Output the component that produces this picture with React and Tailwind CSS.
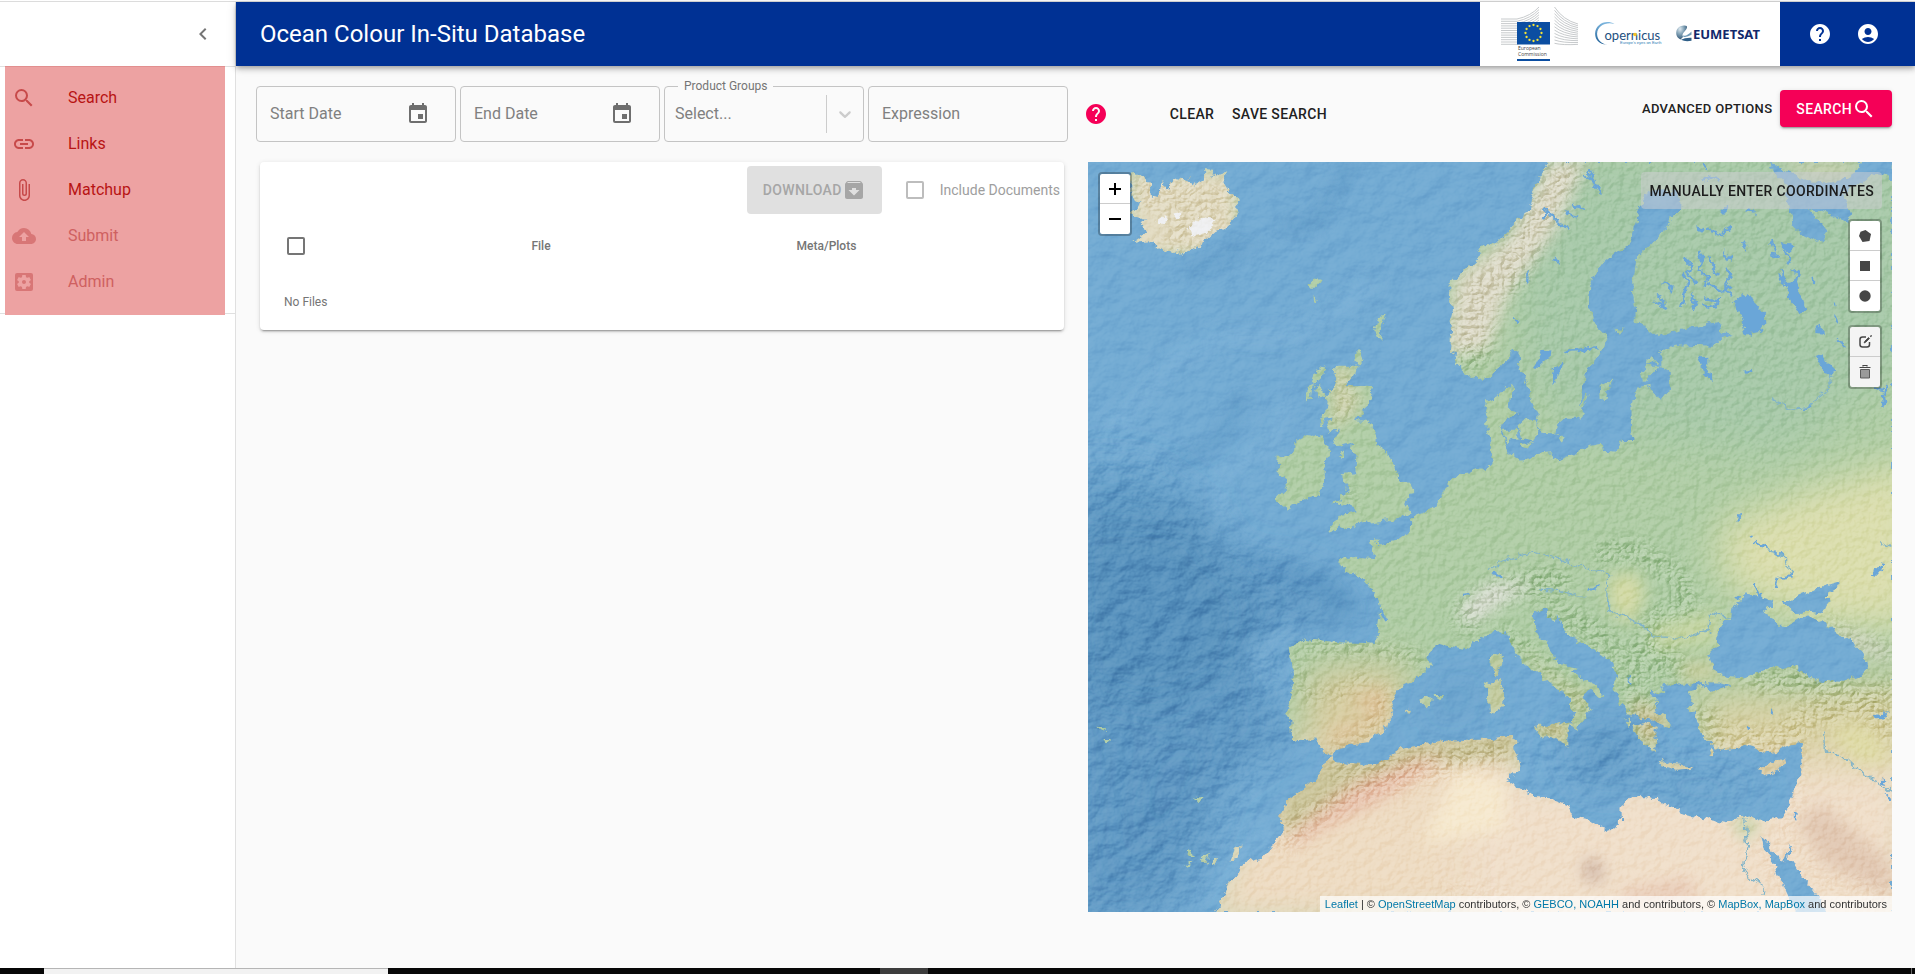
import React from "react";
import {
  MdSearch,
  MdLink,
  MdAttachFile,
  MdBackup,
  MdSettingsApplications,
  MdChevronLeft,
  MdHelp,
  MdAccountCircle,
  MdInsertInvitation,
  MdArchive,
} from "react-icons/md";

const navItems = [
  { label: "Search", Icon: MdSearch },
  { label: "Links", Icon: MdLink },
  { label: "Matchup", Icon: MdAttachFile },
  { label: "Submit", Icon: MdBackup, disabled: true },
  { label: "Admin", Icon: MdSettingsApplications, disabled: true },
];

/* ---------- map data: points are kept per sheet, each sheet has its own origin ---------- */

const SHEETS = { NW: [0, -36], NE: [1200, -36], SW: [0, 1104], SE: [1200, 1104] };

function shift(sheet, points) {
  const [dx, dy] = SHEETS[sheet];
  return points
    .trim()
    .split(/\s+/)
    .map((p) => {
      const [x, y] = p.split(",").map(Number);
      return `${x + dx},${y + dy}`;
    })
    .join("L");
}

const shape = (...parts) => "M" + parts.map(([s, p]) => shift(s, p)).join("L") + "Z";
const line = (s, p) => "M" + shift(s, p);

const mainland = shape(
  ["NE", "180,36 160,80 140,125 128,180 100,200 70,240 40,270 20,290 0,300"],
  ["NW", "1225,290 1190,310 1150,345 1120,375 1088,405 1085,440 1095,480 1085,520 1095,560 1092,605 1110,610 1105,640 1130,665 1160,685 1195,682 1225,655 1255,630"],
  ["NE", "75,590 95,615 98,660 120,700 130,745 155,790 150,820 165,848 200,850 205,818 230,800 268,800 278,745 288,690 292,655 325,625 345,590 360,560 335,535 310,515 300,450 305,400 320,370 345,335 380,305 425,275 438,230 450,200 440,180 460,160 456,135 490,120 560,122 580,140 580,180 545,215 520,260 480,300 445,325 438,380 442,440 450,480 445,520 475,530 510,558 560,540 620,528 690,512 700,540 745,555 700,570 675,590 620,588 560,590 520,608 520,650 548,665 548,720 525,752 500,735 485,708 455,715 440,750 433,770 435,830 440,878 400,880 385,908 345,905 340,885 300,892 260,915 205,938 185,910 150,915 105,935 90,930 60,905 48,870 40,845 30,820 60,805 82,795 60,770 62,745 75,712 55,712"],
  ["NW", "1235,738 1200,755 1193,790 1200,830 1212,860 1215,910 1220,940 1195,955 1190,965 1165,955 1150,970 1110,975 1085,1000 1060,1050 1035,1080 970,1105 968,1150 940,1165"],
  ["SW", "920,40 870,50 870,35 852,32 862,85 800,80 755,92 770,120 820,135 845,165 875,210 880,240 872,300 865,345 830,342 760,340 700,335 650,330 605,352 612,400 618,460 610,510 595,550 610,570 612,625 650,628 685,622 700,655 725,670 750,650 790,642 840,638 855,615 888,605 895,575 918,552 905,515 920,490 945,460 990,440 1025,410 1015,380 1025,355 1050,337 1090,348 1125,356 1160,335 1195,312 1222,297 1255,310"],
  ["SE", "75,350 100,390 150,430 195,465 235,495 250,525 265,550 250,585 262,592 280,570 298,545 298,520 280,505 290,480 310,478 332,500 345,495 335,475 300,460 265,440 240,425 265,415 215,405 195,385 180,345 155,325 135,290 135,250 160,235 185,232 180,260 200,275 210,250 240,310 280,335 330,360 375,395 385,430 380,480 400,520 430,555 500,568 530,590 540,585 530,565 495,550 505,530 488,500 490,475 530,485 515,470 555,458 600,462 650,455 670,448 650,470 610,480 605,510 625,540 635,580 645,615 670,640 715,660 750,655 765,640 800,650 830,668 870,662 910,640 945,635 940,680 940,735 920,780 905,830 880,868 820,875 790,862 750,865 715,883 650,870 580,855 570,840 500,815 480,805 440,805 400,835 402,875 370,905 340,895 300,870 250,860 235,825 180,805 130,800 90,775 58,755 70,735 95,710 85,680 75,650 90,632 60,618 0,632"],
  ["SW", "1200,632 1130,632 1080,635 1000,648 940,660 900,685 850,712 790,705 745,700 725,680 710,700 690,750 640,785 600,815 580,860 585,905 555,950 520,990 470,1000 455,1030 420,1060 405,1110 385,1146"],
  ["SE", "1212,1146"],
  ["NE", "1212,36"]
);

const innerSeas = [
  shape(["SE", "770,190 800,195 860,212 850,230 828,245 860,265 862,290 890,290 930,265 980,262 1030,295 1080,330 1130,370 1140,415 1115,440 1060,455 1000,452 950,435 915,408 850,412 800,432 770,445 710,440 675,420 668,385 660,375 690,345 692,300 700,270 725,270 730,235 755,215"]),
  shape(["SE", "905,210 935,195 975,180 1055,157 1045,175 1005,200 1030,212 1000,230 1005,250 960,245 915,250 905,235 880,210"]),
  shape(["SE", "645,472 665,457 700,458 735,466 700,475 670,482"]),
  shape(["SE", "820,918 850,955 885,995 896,970 908,935 900,988 920,1000 950,1050 990,1100 1015,1150 925,1150 895,1085 870,1025 845,985 825,945"]),
  shape(["NE", "840,30 870,50 915,72 960,94 1010,100 1060,94 1100,70 1125,30 1215,30 1212,90 1190,72 1150,62 1130,100 1080,110 1070,140 1090,190 1080,218 1045,205 1010,185 975,175 960,185 1000,215 1015,240 1010,270 990,278 950,260 910,225 905,175 890,140 900,110 860,70"]),
].join("");

const islands = [
  shape(["NW", "745,650 808,650 790,680 765,710 800,712 852,710 845,745 820,790 785,812 835,815 860,850 872,895 905,920 915,950 930,995 965,998 973,1025 945,1060 962,1085 930,1105 860,1112 800,1120 790,1140 755,1125 722,1150 760,1095 815,1085 800,1070 740,1055 775,1035 780,1005 760,975 805,970 808,920 795,895 800,875 745,885 740,865 765,825 725,850 718,830 735,795 715,800 700,830 700,815 725,770 715,745 740,700"]),
  shape(["NW", "625,875 660,855 700,862 728,905 705,935 708,980 695,1030 640,1055 595,1075 562,1050 600,1010 595,985 572,965 575,920 610,918 625,890"]),
  shape(["NW", "672,700 678,675 704,658 692,690 680,705"]),
  shape(["NW", "660,750 662,715 670,712 665,745"]),
  shape(["NW", "685,720 695,710 710,735 698,742"]),
  shape(["NW", "755,920 765,908 762,925"]),
  shape(["NW", "130,70 150,68 185,105 190,150 215,130 220,95 235,120 265,88 300,92 315,115 350,95 352,60 372,62 370,85 412,72 400,95 415,120 445,145 450,180 420,225 385,240 350,270 300,300 275,308 225,295 195,270 140,275 175,250 165,225 180,205 130,190 170,160 130,140"]),
  shape(["NW", "665,402 680,388 696,392 685,410 672,410"]),
  shape(["NW", "680,445 688,456 680,450"]),
  shape(["NW", "862,540 872,510 888,500 878,530 872,560"]),
  shape(["NW", "800,625 810,605 820,630 805,638"]),
  shape(["NW", "1170,300 1200,285 1218,290 1190,312"]),
  shape(["SE", "12,385 35,370 37,400 25,432 10,410"]),
  shape(["SE", "-5,465 35,448 45,480 42,530 20,545 5,540 3,490"]),
  shape(["SE", "142,590 200,590 245,578 235,615 235,642 200,625 145,605"]),
  shape(["SE", "520,697 560,705 610,710 570,716 525,706"]),
  shape(["SE", "818,715 850,702 892,688 870,720 830,731"]),
  shape(["SE", "662,672 672,655 678,660 668,678"]),
  shape(["SE", "440,590 470,578 500,590 495,615 502,640 498,660 485,640 470,645 455,625"]),
  shape(["SE", "505,555 530,560 548,590 535,582"]),
  shape(["SE", "600,532 615,530 620,542 605,542"]),
  shape(["SE", "500,478 512,482 508,488"]),
  shape(["SE", "412,575 425,570 420,590"]),
  shape(["SW", "1000,515 1020,505 1030,515 1015,528"]),
  shape(["SW", "1046,498 1060,498 1056,504"]),
  shape(["SW", "958,546 968,541 966,548"]),
  shape(["SW", "300,965 306,963 310,975 304,975"]),
  shape(["SW", "340,985 358,975 350,995"]),
  shape(["SW", "376,990 386,990 386,1004 378,1002"]),
  shape(["SW", "430,990 440,965 455,952 444,985"]),
  shape(["SW", "294,1005 304,1000 300,1010"]),
  shape(["SW", "324,803 342,806 330,810"]),
  shape(["SW", "34,594 56,596 40,599"]),
  shape(["SW", "52,630 62,630 58,634"]),
  shape(["NE", "335,710 370,692 350,745 338,750"]),
  shape(["NE", "270,798 296,732 286,765 278,800"]),
  shape(["NE", "465,668 480,650 508,650 490,672 470,690"]),
  shape(["NE", "474,625 488,618 500,632 480,640"]),
  shape(["NE", "95,830 115,812 140,812 148,845 130,868 100,860"]),
  shape(["NE", "50,842 82,842 82,865 60,870"]),
  shape(["NE", "90,882 128,880 118,892"]),
  shape(["NE", "215,860 232,862 225,874"]),
  shape(["NE", "385,540 405,542 398,550"]),
].join("");

const lakes = [
  shape(["NE", "765,432 800,455 830,490 832,520 820,540 790,545 785,558 775,550 760,500 735,460"]),
  shape(["NE", "905,350 935,370 930,400 945,450 955,480 935,490 915,460 895,430 900,410 870,385 868,365 895,400 920,395 925,375"]),
  shape(["NE", "635,622 658,620 658,650 672,690 655,682 640,650"]),
  shape(["NE", "140,650 165,600 190,598 188,625 165,635 150,650"]),
  shape(["NE", "193,700 198,655 222,635 208,680"]),
  shape(["NE", "982,625 1010,612 1018,640 1042,665 1025,678 1000,650"]),
  shape(["NE", "985,538 990,530 1008,538 1006,548 985,546"]),
  shape(["NE", "882,275 900,280 920,295 905,308 885,295"]),
  shape(["NE", "848,308 870,312 868,322 852,320"]),
  shape(["NE", "628,225 645,235 650,248 630,242"]),
  shape(["NE", "705,300 718,315 735,322 735,335 712,322"]),
  shape(["NE", "768,665 785,660 792,668 775,674"]),
  shape(["NE", "968,380 976,378 975,398 969,396"]),
  shape(["SE", "1160,555 1180,552 1200,543 1190,565 1170,568"]),
  shape(["SE", "845,548 852,536 860,555 850,562"]),
  shape(["SE", "780,582 792,598 782,596"]),
  shape(["SE", "1183,738 1198,762 1186,760"]),
  shape(["SE", "1194,790 1210,808 1198,812"]),
  shape(["SE", "800,34 835,48 846,62 815,50"]),
  shape(["SE", "870,140 905,135 915,142 880,146"]),
  shape(["SE", "1150,132 1172,115 1185,95 1188,110 1165,138"]),
  shape(["SE", "920,846 926,846 925,872 921,870"]),
].join("");

const streams = [
  line("NE", "300,60 315,95 340,128"),
  line("NE", "290,80 320,95"),
  line("NE", "165,205 175,180 210,215 240,235"),
  line("NE", "200,320 212,335 208,350"),
  line("NE", "230,190 270,200"),
  line("NE", "255,160 290,180"),
  line("NE", "118,360 118,400"),
  line("NE", "80,500 92,515"),
  line("NE", "232,603 270,600 320,592 325,605"),
  line("NE", "590,325 610,345 600,370 625,400"),
  line("NE", "632,300 645,330 635,360 660,380 650,410"),
  line("NE", "665,320 670,350 690,375"),
  line("NE", "585,370 600,395 590,430 580,470"),
  line("NE", "610,430 625,460 615,480"),
  line("NE", "650,445 690,450 680,475 640,465"),
  line("NE", "715,350 725,385 710,415 735,435"),
  line("NE", "660,400 700,420 730,410"),
  line("NE", "520,400 550,405 545,430"),
  line("NE", "515,430 530,470 500,455"),
  line("NE", "660,240 700,252 735,230"),
  line("NE", "700,190 712,168"),
  line("NE", "770,180 800,185"),
  line("NE", "650,40 660,60"),
  line("NE", "690,90 670,80 640,90"),
  line("NE", "765,275 778,300"),
  line("NE", "880,360 890,390"),
  line("NE", "890,300 905,340"),
  line("NE", "1035,455 1036,470"),
  line("NE", "1042,500 1048,520"),
  line("NE", "1048,565 1068,588"),
  line("NE", "945,778 975,764"),
  line("NE", "1200,705 1185,735 1190,770"),
  line("NE", "1160,715 1185,720"),
  line("NE", "752,1090 752,1115"),
  line("NE", "785,1155 790,1165"),
  line("NE", "800,1175 840,1198"),
  line("NE", "850,275 860,310"),
  line("SE", "860,60 892,90"),
  line("SE", "912,128 910,142"),
  line("SE", "870,145 860,175"),
  line("SE", "18,130 42,140"),
  line("SE", "305,182 330,168"),
  line("SE", "742,198 750,210"),
  line("SE", "800,160 808,195 820,195"),
  line("SE", "420,445 430,460"),
  line("SW", "1125,195 1145,192"),
  line("SW", "1225,130 1240,140"),
  line("SW", "876,235 895,270"),
].join("");

const rivers = [
  line("SE", "0,120 60,85 130,65 200,85 270,110 330,125 362,128 358,240 390,255 450,275 500,320 590,325 660,300 668,250 725,262"),
  line("SE", "835,60 860,66 890,90 912,130"),
  line("SE", "1010,600 1012,660 1080,690 1130,735 1180,760 1212,790"),
  line("SE", "770,865 780,960 765,1000 780,1040 830,1070 825,1095"),
  line("SE", "150,180 220,185 290,205"),
  line("NE", "850,745 900,775 960,770 1020,720 1028,680"),
  line("SE", "1180,40 1210,50"),
].join("");

function TerrainMap() {
  return (
    <svg
      viewBox="0 0 2412 2250"
      preserveAspectRatio="xMidYMid slice"
      className="absolute inset-0 h-full w-full"
      role="img"
      aria-label="Relief map of Europe"
    >
      <defs>
        <filter id="coast" x="0" y="0" width="2412" height="2250" filterUnits="userSpaceOnUse">
          <feTurbulence type="fractalNoise" baseFrequency="0.04" numOctaves="4" seed="4" />
          <feDisplacementMap in="SourceGraphic" scale="28" xChannelSelector="R" yChannelSelector="G" />
        </filter>
        <filter id="blurL" x="-50%" y="-50%" width="200%" height="200%">
          <feGaussianBlur stdDeviation="60" />
        </filter>
        <filter id="blurM" x="-50%" y="-50%" width="200%" height="200%">
          <feGaussianBlur stdDeviation="24" />
        </filter>
        <filter id="relief" x="0" y="0" width="2412" height="2250" filterUnits="userSpaceOnUse" colorInterpolationFilters="sRGB">
          <feTurbulence type="fractalNoise" baseFrequency="0.045" numOctaves="4" seed="11" result="n" />
          <feColorMatrix in="n" type="matrix" values="0 0 0 0 0  0 0 0 0 0  0 0 0 0 0  1 0 0 0 0" />
          <feDiffuseLighting surfaceScale="14" diffuseConstant="0.75" lightingColor="#ffffff">
            <feDistantLight azimuth="225" elevation="45" />
          </feDiffuseLighting>
        </filter>
        <filter id="ridges" x="0" y="0" width="2412" height="2250" filterUnits="userSpaceOnUse" colorInterpolationFilters="sRGB">
          <feTurbulence type="turbulence" baseFrequency="0.032 0.04" numOctaves="4" seed="23" result="n" />
          <feColorMatrix in="n" type="matrix" values="0 0 0 0 0  0 0 0 0 0  0 0 0 0 0  1 0 0 0 0" />
          <feDiffuseLighting surfaceScale="18" diffuseConstant="0.8" lightingColor="#ffffff">
            <feDistantLight azimuth="225" elevation="48" />
          </feDiffuseLighting>
        </filter>
        <filter id="seabed" x="0" y="0" width="2412" height="2250" filterUnits="userSpaceOnUse" colorInterpolationFilters="sRGB">
          <feTurbulence type="fractalNoise" baseFrequency="0.014 0.018" numOctaves="5" seed="7" result="n" />
          <feColorMatrix in="n" type="matrix" values="0 0 0 0 0  0 0 0 0 0  0 0 0 0 0  1 0 0 0 0" />
          <feDiffuseLighting surfaceScale="16" diffuseConstant="0.72" lightingColor="#ffffff">
            <feDistantLight azimuth="225" elevation="45" />
          </feDiffuseLighting>
        </filter>
        <mask id="deep" maskUnits="userSpaceOnUse" x="0" y="0" width="2412" height="2250">
          <rect width="2412" height="2250" fill="#777" />
          <g filter="url(#blurL)" fill="#fff">
            <path d={shape(["NW", "-80,850 200,850 400,1150 700,1300 600,1800 300,2300 -80,2300"])} />
            <path d={shape(["SE", "-100,640 250,600 500,600 900,720 700,840 300,800"])} />
          </g>
        </mask>
        <mask id="land" maskUnits="userSpaceOnUse" x="0" y="0" width="2412" height="2250">
          <g filter="url(#coast)">
            <rect width="2412" height="2250" fill="#000" />
            <path d={mainland} fill="#fff" stroke="#fff" strokeWidth="6" />
            <path d={islands} fill="#fff" stroke="#fff" strokeWidth="6" />
            <path d={innerSeas} fill="#000" />
          </g>
        </mask>
        <mask id="ranges" maskUnits="userSpaceOnUse" x="0" y="0" width="2412" height="2250">
          <g filter="url(#blurM)" stroke="#fff" fill="none" strokeLinecap="round" strokeLinejoin="round">
            <path d={line("NW", "1150,600 1170,430 1260,370")} strokeWidth="120" />
            <path d={line("NE", "0,420 90,320 170,170 230,50")} strokeWidth="110" />
            <path d={line("NW", "180,120 400,160 280,260")} strokeWidth="120" opacity="0.8" />
            <path d={line("NW", "745,800 790,760 760,690")} strokeWidth="50" opacity="0.8" />
            <path d={line("NW", "780,1010 790,1050")} strokeWidth="40" opacity="0.7" />
            <path d={line("SW", "1140,290 1130,240 1200,190")} strokeWidth="70" />
            <path d={line("SE", "0,190 90,170 210,150")} strokeWidth="80" />
            <path d={line("SE", "40,300 130,370 220,450 290,540")} strokeWidth="45" />
            <path d={line("SE", "200,250 320,310 420,400 450,500 480,620")} strokeWidth="90" opacity="0.8" />
            <path d={line("SE", "340,70 450,60 560,130 610,230 500,260 470,350 560,380")} strokeWidth="60" />
            <path d={line("SE", "480,300 500,420 580,430")} strokeWidth="60" opacity="0.7" />
            <path d={line("SW", "650,350 850,355 1000,385")} strokeWidth="40" />
            <path d={line("SW", "630,400 650,500 780,480 830,440")} strokeWidth="40" opacity="0.8" />
            <path d={line("SW", "740,650 850,610 900,480")} strokeWidth="45" opacity="0.8" />
            <path d={line("SW", "590,930 650,870 780,790 1000,720 1230,670")} strokeWidth="80" opacity="0.8" />
            <path d={line("SW", "740,710 900,700 1240,650")} strokeWidth="50" opacity="0.8" />
            <path d={line("SE", "650,560 680,620 860,640 960,560 1200,480")} strokeWidth="75" />
            <path d={line("SE", "800,450 940,450 1100,490 1212,600")} strokeWidth="75" />
            <path d={line("SE", "1010,280 1120,330 1212,370")} strokeWidth="40" />
            <path d={line("SE", "945,650 920,800 880,940")} strokeWidth="35" opacity="0.7" />
            <path d={line("SE", "830,960 900,1100")} strokeWidth="40" opacity="0.7" />
            <path d={line("SE", "920,950 1000,1060 1200,1080")} strokeWidth="40" opacity="0.6" />
            <path d={line("SW", "1060,1080 1240,1090")} strokeWidth="60" opacity="0.4" />
            <path d={line("SE", "140,600 240,600")} strokeWidth="40" />
          </g>
        </mask>
      </defs>

      <rect width="2412" height="2250" fill="#73abd3" />
      <g filter="url(#blurL)" fill="#4c86b4">
        <path d={shape(["NW", "-80,950 180,950 260,1010 400,1180 500,1300 480,1560 200,1700 -80,1600"])} opacity="0.4" />
        <path d={shape(["SW", "430,100 640,110 800,220 780,290 590,290 500,400 560,520 620,620 400,760 330,1000 250,1150 -80,1200 -80,-60 350,-60"])} opacity="0.5" />
        <path d={shape(["SW", "180,650 420,640 400,760 250,900 120,1000"])} opacity="0.2" />
        <path d={shape(["SE", "230,620 420,560 470,700 360,780 260,740"])} opacity="0.45" />
        <path d={shape(["SE", "400,740 640,720 860,760 700,830 500,800"])} opacity="0.25" />
        <path d={shape(["SW", "1040,470 1180,400 1180,560 1000,600"])} opacity="0.2" />
      </g>
      <g filter="url(#blurM)" fill="none" stroke="#8cbde0" strokeWidth="30" strokeLinecap="round" opacity="0.5">
        <path d={line("NW", "80,830 240,640 400,560 620,560 850,400")} />
        <path d={line("NW", "400,1100 400,960 540,890 600,760")} />
        <path d={line("SW", "600,300 500,370 540,450")} />
        <path d={line("SW", "560,900 460,980 380,1100")} />
      </g>
      <g filter="url(#blurM)" fill="none" stroke="#4a86b8" strokeWidth="16" strokeLinecap="round" opacity="0.7">
        <path d={line("NW", "590,230 680,220 740,120 790,40")} />
        <path d={line("NW", "300,360 400,330 480,280")} />
        <path d={line("NW", "250,950 380,880 470,740")} />
        <path d={line("SW", "470,90 600,130 720,170 790,240")} strokeWidth="26" />
      </g>
      <rect width="2412" height="2250" filter="url(#seabed)" mask="url(#deep)" opacity="0.5" className="mix-blend-soft-light" />

      <g mask="url(#land)">
        <rect width="2412" height="2250" fill="#b0cda6" />
        <g filter="url(#blurL)">
          <path d={shape(["NE", "60,0 1300,0 1300,620 900,900 300,860 100,700"])} fill="#a7c9a9" />
          <path d={shape(["SE", "700,-20 950,-120 1300,-220 1300,300 1000,280 740,190 690,80"])} fill="#dbdeae" />
          <path d={shape(["SW", "560,660 1300,560 1300,1200 300,1200"])} fill="#eedcc3" />
          <path d={shape(["SE", "-60,720 1300,690 1300,1300 -60,1300"])} fill="#f0dfca" />
          <path d={shape(["SE", "620,500 1000,480 1300,450 1300,700 640,700"])} fill="#d9d2a6" />
          <path d={shape(["SW", "660,420 960,400 960,640 640,700"])} fill="#d8cda2" />
        </g>
        <g filter="url(#blurM)">
          <path d={shape(["SW", "580,690 740,660 1300,590 1300,680 1080,700 800,760 620,900 560,900"])} fill="#cdc79e" />
          <path d={shape(["SW", "780,500 900,470 900,560 740,650 720,600 850,560"])} fill="#dfc79f" />
          <path d={shape(["SW", "800,760 980,690 1080,680 900,800 700,900 600,960 620,900"])} fill="#e8c3ad" />
          <path d={shape(["SW", "1110,720 1250,750 1250,900 1000,940"])} fill="#f6e9cf" />
          <path d={shape(["NE", "-130,620 -100,380 60,260 180,30 300,30 200,250 60,440 0,600"])} fill="#dcd9c6" />
          <path d={shape(["NW", "120,60 450,60 460,320 130,320"])} fill="#e2dbc2" />
          <path d={shape(["NW", "730,650 810,650 780,720 830,730 800,790 730,850"])} fill="#cfd2ad" />
          <path d={shape(["SE", "360,140 450,130 470,200 430,280 370,240"])} fill="#d4daa6" />
          <path d={shape(["SE", "490,290 690,240 700,340 500,360"])} fill="#c6d6a4" />
          <path d={shape(["SE", "560,400 680,390 700,440 600,460"])} fill="#c9cfa0" />
          <path d={shape(["SE", "800,430 940,410 1140,430 1212,400 1212,440 900,470"])} fill="#b5cba1" />
          <path d={shape(["SE", "60,330 100,360 250,470 330,490 280,580 240,520"])} fill="#bfcb9f" />
          <path d={shape(["SE", "430,500 560,560 500,660 440,620"])} fill="#cbc69c" />
          <path d={shape(["SE", "10,370 40,370 50,545 0,545"])} fill="#cdca9c" />
          <path d={shape(["SE", "140,570 250,570 240,650 140,610"])} fill="#cdc79c" />
          <path d={shape(["SE", "510,690 900,680 880,735 510,720"])} fill="#d6c89e" />
          <path d={shape(["SE", "1020,590 1150,590 1212,700 1100,700"])} fill="#dfdba8" />
          <path d={shape(["SE", "930,870 1000,1000 1212,1100 1212,1000 1000,820"])} fill="#e2c9b4" />
          <path d={shape(["SE", "730,866 820,870 775,930"])} fill="#b8cf9f" />
          <path d={shape(["SE", "280,1000 330,980 350,1050 300,1060"])} fill="#cfb5a4" />
          <path d={shape(["SE", "400,1080 600,1040 640,1110 400,1140"])} fill="#e9cdb9" />
          <path d={shape(["SE", "1010,280 1120,320 1212,360 1212,390 1080,350"])} fill="#d0d3c0" />
          <path d={shape(["SE", "-90,240 0,160 150,160 60,210 -60,290"])} fill="#d9ddd2" />
          <path d={shape(["NE", "860,30 1120,30 1080,90 960,90"])} fill="#c5cfae" />
        </g>
        <rect width="2412" height="2250" filter="url(#relief)" opacity="0.28" className="mix-blend-soft-light" />
        <rect width="2412" height="2250" filter="url(#ridges)" mask="url(#ranges)" opacity="0.8" className="mix-blend-soft-light" />
        <g fill="#f2f4fa" filter="url(#coast)" opacity="0.85">
          <path d={shape(["NW", "300,235 340,200 385,208 360,245 310,258"])} />
          <path d={shape(["NW", "205,215 235,192 240,205 215,222"])} />
          <path d={shape(["NW", "255,195 280,186 280,205 262,208"])} />
        </g>
        <path d={lakes} fill="#6ba6d8" filter="url(#coast)" />
        <path d={streams} fill="none" stroke="#6ba6d8" strokeWidth="7" filter="url(#coast)" />
        <path d={rivers} fill="none" stroke="#82b4c8" strokeWidth="4" filter="url(#coast)" />
      </g>
    </svg>
  );
}

/* ---------- logos ---------- */

const stars = Array.from({ length: 12 }, (_, i) => {
  const a = (i * Math.PI) / 6;
  return [32.5 + 8 * Math.sin(a), 27 - 8 * Math.cos(a)];
});

function CommissionLogo() {
  return (
    <svg viewBox="0 0 79 56" className="h-14 w-[79px] shrink-0" role="img" aria-label="European Commission">
      <g stroke="#b9bcbf" strokeWidth="0.8" fill="none">
        {Array.from({ length: 12 }, (_, i) => (
          <path key={i} d={`M0 ${13 + i * 2.3}H16Q30 ${10 + i * 2.2} 38 ${1 + i * 2.6}`} />
        ))}
        {Array.from({ length: 12 }, (_, i) => (
          <path key={"r" + i} d={`M53.500 ${1 + i * 3.3}Q62 ${14 + i * 2.3} 77 ${18 + i * 1.85}`} />
        ))}
      </g>
      <path d="M38 0H53V40H38Z" fill="#fff" />
      <rect x="16" y="16" width="33" height="22.500" fill="#0b4ea2" />
      {stars.map(([x, y], i) => (
        <circle key={i} cx={x} cy={y} r="1.15" fill="#f5e335" />
      ))}
      <text x="17" y="44" fontSize="5" fontFamily="'Open Sans', sans-serif" fill="#404040">European</text>
      <text x="17" y="50" fontSize="5" fontFamily="'Open Sans', sans-serif" fill="#404040">Commission</text>
      <rect x="16" y="53" width="33" height="2" fill="#0b4ea2" />
    </svg>
  );
}

function CopernicusLogo() {
  return (
    <svg viewBox="0 0 68 28" className="h-7 w-[68px] shrink-0" role="img" aria-label="Copernicus">
      <defs>
        <linearGradient id="arc" x1="0" y1="0" x2="0" y2="1">
          <stop offset="0" stopColor="#7fb8e0" />
          <stop offset="1" stopColor="#175a93" />
        </linearGradient>
      </defs>
      <path d="M20.500 4C12-1 1.500 4 1.100 13.500C.9 20.500 6.500 25 13 24.600C7.500 23.600 2.900 19.500 3.100 13.500C3.500 6 12 1.500 20.500 4Z" fill="url(#arc)" />
      <text x="10.500" y="20" fontSize="13" fontFamily="Lato, sans-serif" fill="#1d4f80">opernicus</text>
      <circle cx="41" cy="14.500" r="1.800" fill="#f7c325" />
      <text x="26" y="24" fontSize="4" fontFamily="'Liberation Sans', sans-serif" fill="#2b7ab5">Europe’s eyes on Earth</text>
    </svg>
  );
}

function EumetsatLogo() {
  return (
    <svg viewBox="0 0 88 18" className="h-[18px] w-[88px] shrink-0" role="img" aria-label="EUMETSAT">
      <defs>
        <radialGradient id="globe" cx="0.35" cy="0.25" r="0.8">
          <stop offset="0" stopColor="#dde8ef" />
          <stop offset="0.5" stopColor="#7c9db2" />
          <stop offset="1" stopColor="#2c4f70" />
        </radialGradient>
      </defs>
      <path d="M8 .5C13 .3 11 4 8.500 6.500C6.500 8.500 6 10 7 12L4.500 14.500C1 13 0 10 .3 7C.8 3 4 .7 8 .5Z" fill="url(#globe)" />
      <path d="M7 10.500Q11 11.500 15.500 6.500V9.800Q11 12.500 7.300 11.700Z" fill="#6f99b6" />
      <path d="M5 14.800Q9 12.500 15.500 12.800V15.800Q9 17 5 14.800Z" fill="#2f5f88" />
      <text x="17" y="14" fontSize="13" fontWeight="700" fontFamily="'Noto Sans', sans-serif" fill="#12286b">EUMETSAT</text>
    </svg>
  );
}

/* ---------- page parts ---------- */

function Sidebar() {
  return (
    <aside className="flex w-59 shrink-0 flex-col border-r border-[#e0e0e0] bg-white">
      <div className="flex h-16 items-center justify-end pr-5">
        <button type="button" aria-label="Collapse menu" className="text-[#757575]">
          <MdChevronLeft size={24} />
        </button>
      </div>
      <nav className="relative border-y border-[#e0e0e0] py-2">
        <div className="absolute -top-px right-2.5 -bottom-0.5 left-[5px] border-t border-[#e28f8f] bg-[#eda2a2]" />
        <ul className="relative">
          {navItems.map(({ label, Icon, disabled }) => (
            <li key={label}>
              <a
                href={"#" + label.toLowerCase()}
                aria-disabled={disabled}
                className={
                  disabled
                    ? "flex h-[46px] items-center gap-8 pl-3 text-base text-[#cf6060]"
                    : "flex h-[46px] items-center gap-8 pl-3 text-base text-[#b81414]"
                }
              >
                <Icon size={24} className={disabled ? "text-[#d87676]" : "text-[#c74a4a]"} />
                {label}
              </a>
            </li>
          ))}
        </ul>
      </nav>
    </aside>
  );
}

function Header() {
  return (
    <header className="relative z-10 flex h-16 items-center bg-[#003194] pl-6 text-white shadow-[0_2px_4px_-1px_rgba(0,0,0,0.2),0_4px_5px_rgba(0,0,0,0.14),0_1px_10px_rgba(0,0,0,0.12)]">
      <h1 className="flex-1 text-2xl">Ocean Colour In-Situ Database</h1>
      <div className="flex h-16 w-[300px] items-center gap-3.5 bg-white pl-[21px]">
        <CommissionLogo />
        <CopernicusLogo />
        <EumetsatLogo />
      </div>
      <div className="flex gap-6 pr-[35px] pl-7">
        <button type="button" aria-label="Help"><MdHelp size={24} /></button>
        <button type="button" aria-label="Account"><MdAccountCircle size={24} /></button>
      </div>
    </header>
  );
}

const field = "flex h-14 w-50 items-center rounded border border-[#c4c4c4]";
const input = "w-full min-w-0 bg-transparent pl-[13px] text-base outline-none placeholder:text-[#808080]";
const textButton = "px-2 text-sm font-medium tracking-wide text-[#212121]";

function DateField({ label }) {
  return (
    <div className={field}>
      <input type="text" aria-label={label} placeholder={label} className={input} />
      <button type="button" aria-label={"Pick " + label} className="mr-[25px] ml-6 text-[#6e6e6e]">
        <MdInsertInvitation size={24} />
      </button>
    </div>
  );
}

function SearchForm() {
  return (
    <form className="flex items-start justify-between py-5 pr-[23px] pl-5" onSubmit={(e) => e.preventDefault()}>
      <div className="flex items-center gap-1">
        <DateField label="Start Date" />
        <DateField label="End Date" />
        <div className={field + " relative"}>
          <label htmlFor="groups" className="absolute -top-[9px] left-[13px] bg-[#fafafa] px-1.5 text-xs leading-4 text-[#757575]">
            Product Groups
          </label>
          <select id="groups" className="h-full w-full appearance-none bg-transparent pl-2.5 text-base text-[#808080] outline-none">
            <option>Select...</option>
          </select>
          <div className="pointer-events-none absolute top-2 right-0 bottom-2 flex w-[37px] items-center justify-center border-l border-[#ccc]">
            <svg viewBox="0 0 20 20" className="size-5 fill-[#ccc]" aria-hidden="true">
              <path d="M4.516 7.548c0.436-0.446 1.043-0.481 1.576 0l3.908 3.747 3.908-3.747c0.533-0.481 1.141-0.446 1.574 0 0.436 0.445 0.408 1.197 0 1.615-0.406 0.418-4.695 4.502-4.695 4.502-0.217 0.223-0.502 0.335-0.787 0.335s-0.570-0.112-0.789-0.335c0 0-4.287-4.084-4.695-4.502s-0.436-1.170 0-1.615z" />
            </svg>
          </div>
        </div>
        <div className={field}>
          <input type="text" aria-label="Expression" placeholder="Expression" className={input} />
        </div>
        <button type="button" aria-label="Expression help" className="ml-3 text-[#f50057]">
          <MdHelp size={24} />
        </button>
        <div className="ml-12 flex">
          <button type="button" className={textButton + " w-16"}>CLEAR</button>
          <button type="button" className={textButton}>SAVE SEARCH</button>
        </div>
      </div>
      <div className="mt-1 flex h-[37px] items-center">
        <button type="button" className="px-2 text-[13px] font-medium tracking-wide text-[#212121]">ADVANCED OPTIONS</button>
        <button
          type="submit"
          className="flex h-[37px] items-center rounded bg-[#f50057] px-4 text-sm font-medium tracking-wide text-white shadow-[0_3px_1px_-2px_rgba(0,0,0,0.2),0_2px_2px_rgba(0,0,0,0.14),0_1px_5px_rgba(0,0,0,0.12)]"
        >
          SEARCH
          <MdSearch size={24} />
        </button>
      </div>
    </form>
  );
}

const box = "size-[18px] appearance-none rounded-xs border-2";

function ResultsCard() {
  return (
    <section className="self-start rounded bg-white shadow-[0_3px_1px_-2px_rgba(0,0,0,0.2),0_2px_2px_rgba(0,0,0,0.14),0_1px_5px_rgba(0,0,0,0.12)]">
      <div className="flex h-14 items-center justify-end pr-1">
        <button type="button" disabled className="flex h-12 items-center rounded bg-[#e0e0e0] px-4 text-sm font-medium tracking-wide text-[#a6a6a6]">
          DOWNLOAD
          <MdArchive size={24} />
        </button>
        <label className="ml-6 flex items-center gap-4 text-sm text-[#9e9e9e]">
          <input type="checkbox" disabled className={box + " border-[#bdbdbd]"} />
          Include Documents
        </label>
      </div>
      <table className="w-full table-fixed text-xs text-[#757575]">
        <thead>
          <tr className="h-14">
            <th className="w-18 pl-[27px] text-left">
              <input type="checkbox" aria-label="Select all files" className={box + " block border-[#757575]"} />
            </th>
            <th className="w-[52%] text-center font-medium">File</th>
            <th className="w-[19%] text-center font-medium">Meta/Plots</th>
            <td />
          </tr>
        </thead>
        <tbody>
          <tr className="h-14">
            <td colSpan={4} className="pl-6">No Files</td>
          </tr>
        </tbody>
      </table>
    </section>
  );
}

const bar = "flex w-[34px] flex-col divide-y divide-[#ccc] overflow-hidden rounded border-2 border-black/25 bg-clip-padding";
const tool = "flex h-[30px] items-center justify-center text-[#464646]";
const zoomKey = "flex h-[30px] items-center justify-center text-black";
const credit = "text-[#0078a8]";

function MapPanel() {
  return (
    <section aria-label="Map" className="relative h-[750px] overflow-hidden bg-[#73abd3]">
      <TerrainMap />
      <div className={bar + " absolute top-2.5 left-2.5 bg-white"}>
        <button type="button" aria-label="Zoom in" className={zoomKey}>
          <svg viewBox="0 0 12 12" className="size-3" stroke="currentColor" strokeWidth="2"><path d="M0 6H12M6 0V12" /></svg>
        </button>
        <button type="button" aria-label="Zoom out" className={zoomKey}>
          <svg viewBox="0 0 12 12" className="size-3" stroke="currentColor" strokeWidth="2"><path d="M0 6H12" /></svg>
        </button>
      </div>
      <div className="absolute top-2.5 right-2.5 flex flex-col items-end gap-2.5">
        <button type="button" className="h-[37px] rounded bg-[#cdcdd2]/50 px-2 text-sm font-medium tracking-wide text-[#1c1c1c]">
          MANUALLY ENTER COORDINATES
        </button>
        <div className="flex flex-col gap-3">
          <div className={bar + " bg-white"}>
            <button type="button" aria-label="Draw a polygon" className={tool}>
              <svg viewBox="0 0 12 12" className="size-3" fill="currentColor"><path d="M6.500 0 12 4 10.500 11 3.500 12 0 6 1.500 1.800Z" /></svg>
            </button>
            <button type="button" aria-label="Draw a rectangle" className={tool}>
              <svg viewBox="0 0 12 12" className="size-3" fill="currentColor"><path d="M1 1h10v10H1z" /></svg>
            </button>
            <button type="button" aria-label="Draw a circle" className={tool}>
              <svg viewBox="0 0 12 12" className="size-3" fill="currentColor"><circle cx="6" cy="6" r="5.700" /></svg>
            </button>
          </div>
          <div className={bar + " bg-[#f4f4f4]"}>
            <button type="button" aria-label="Edit layers" className={tool}>
              <svg viewBox="0 0 13 13" className="size-[13px]" fill="none" stroke="currentColor" strokeWidth="1.500">
                <path d="M7 2H3.500Q1 2 1 4.500V9.500Q1 12 3.500 12H8Q10.500 12 10.500 9.500V7" />
                <path d="M5 8 6 6 9.500 2.500 10.500 3.500 7 7Z" fill="currentColor" strokeWidth="0.800" />
                <path d="M11.500.5 12.500 1.500" strokeWidth="1.800" />
              </svg>
            </button>
            <button type="button" aria-label="Delete layers" className={tool}>
              <svg viewBox="0 0 12 14" className="h-3.5 w-3">
                <path d="M4 1.500V.5H8V1.500M.5 2.500H11.500" stroke="#464646" fill="none" strokeWidth="1.200" />
                <path d="M1.500 4.500H10.500V13H1.500Z" fill="#9a9a9a" stroke="#5a5a5a" />
              </svg>
            </button>
          </div>
        </div>
      </div>
      <p className="absolute right-0 bottom-0 bg-white/70 px-[5px] font-['Liberation_Sans',Arial,sans-serif] text-[11px] leading-4 text-[#333]">
        <a href="#leaflet" className={credit}>Leaflet</a> | © <a href="#osm" className={credit}>OpenStreetMap</a> contributors, ©{" "}
        <a href="#gebco" className={credit}>GEBCO, NOAHH</a> and contributors, © <a href="#mapbox" className={credit}>MapBox, MapBox</a> and contributors
      </p>
    </section>
  );
}

export default function App() {
  return (
    <div className="flex min-h-screen flex-col bg-[#fafafa] font-[Roboto,sans-serif]">
      <div className="h-0.5 border-b border-[#dcdcdc] bg-white" />
      <div className="flex flex-1">
        <Sidebar />
        <div className="min-w-0 flex-1">
          <Header />
          <main>
            <SearchForm />
            <div className="grid grid-cols-2 gap-6 pr-[23px] pl-6">
              <ResultsCard />
              <MapPanel />
            </div>
          </main>
        </div>
      </div>
      <footer className="flex h-1.5 bg-[#070707]">
        <div className="ml-11 w-86 border-t border-[#b5b5b5] bg-[#f2f2f2]" />
        <div className="ml-[492px] w-12 bg-[#3d3d3d]" />
        <div className="mr-[3px] ml-auto w-px bg-[#6a6a6a]" />
      </footer>
    </div>
  );
}
